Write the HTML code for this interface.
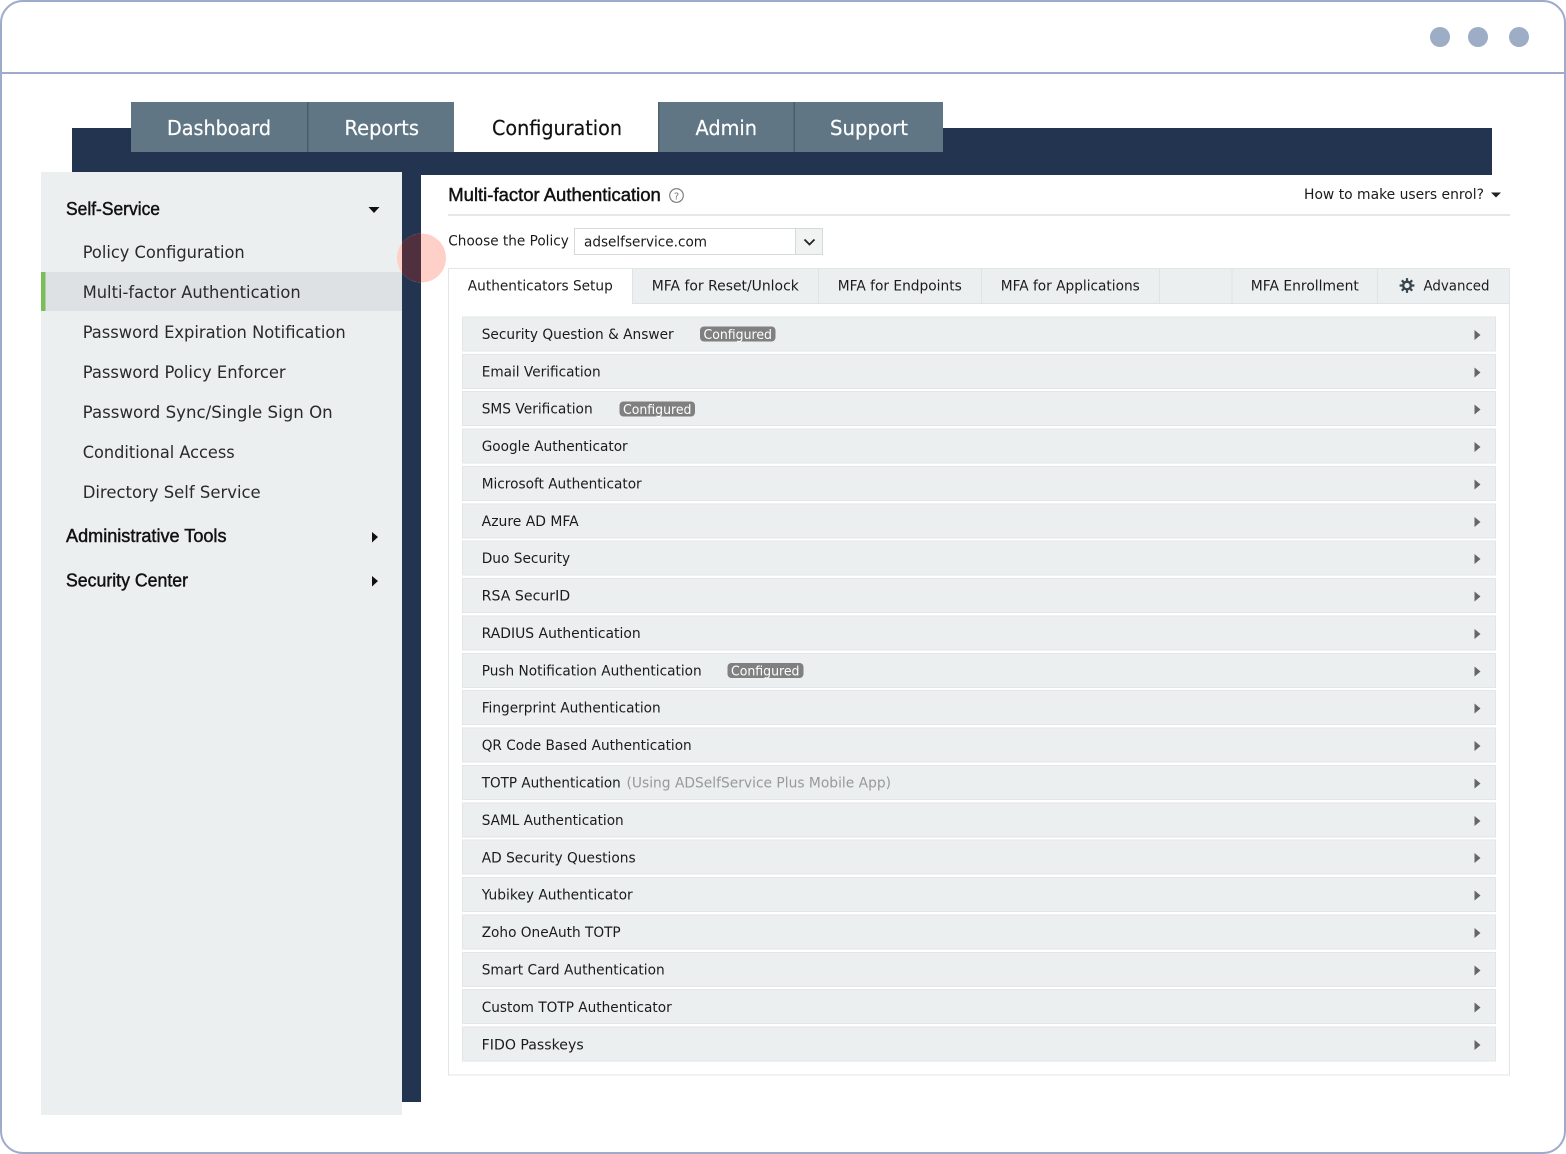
<!DOCTYPE html>
<html><head><meta charset="utf-8"><title>Multi-factor Authentication</title>
<style>
html,body{margin:0;padding:0;background:#fff;width:1566px;height:1154px;overflow:hidden}
svg{display:block}
text{font-family:"DejaVu Sans","Liberation Sans",sans-serif;font-size:13.8px;fill:#1b1b1b}
.r{font-size:13.8px}
.n{font-size:16.5px;fill:#2a2a2a}
.h{font-family:"Liberation Sans",sans-serif;font-size:18.5px;fill:#111;stroke:#111;stroke-width:.45px}
.t{font-size:20px;fill:#fff;stroke:#fff;stroke-width:.2px}
.row{fill:#ecefef;stroke:#e3e6e7;stroke-width:1}
.tb{font-size:14px}
.badge{font-size:13px;fill:#fff}
.arr{fill:#666}
</style></head><body>
<svg xmlns="http://www.w3.org/2000/svg" width="1566" height="1154" viewBox="0 0 1566 1154">
<defs>
<clipPath id="cn"><rect x="402" y="175" width="19" height="200"/></clipPath>
</defs>
<rect x="1" y="1" width="1564" height="1152" rx="22" fill="#fff" stroke="#9fabcb" stroke-width="2"/>
<rect x="2" y="72" width="1562" height="2" fill="#9fabcb"/>
<circle cx="1440" cy="37" r="10" fill="#9dadc6"/><circle cx="1478" cy="37" r="10" fill="#9dadc6"/><circle cx="1519" cy="37" r="10" fill="#9dadc6"/>

<rect x="72" y="128" width="1420" height="47" fill="#223450"/>
<rect x="131" y="102" width="323" height="50" fill="#607684"/>
<rect x="454" y="102" width="204" height="50" fill="#fff"/>
<rect x="658" y="102" width="285" height="50" fill="#607684"/>
<rect x="307" y="102" width="1.500" height="50" fill="#4a5c68"/>
<rect x="658" y="102" width="1.500" height="50" fill="#4f626e"/>
<rect x="793.500" y="102" width="1.500" height="50" fill="#4a5c68"/>
<text class="t" x="167" y="135" textLength="104" lengthAdjust="spacingAndGlyphs">Dashboard</text>
<text class="t" x="344.500" y="135" textLength="74.500" lengthAdjust="spacingAndGlyphs">Reports</text>
<text class="t" x="492" y="135" textLength="130" lengthAdjust="spacingAndGlyphs" style="fill:#111;stroke:#111">Configuration</text>
<text class="t" x="695.500" y="135" textLength="61.500" lengthAdjust="spacingAndGlyphs">Admin</text>
<text class="t" x="830" y="135" textLength="78" lengthAdjust="spacingAndGlyphs">Support</text>

<rect x="402" y="175" width="19" height="927" fill="#223450"/>
<rect x="41" y="172" width="361" height="943" fill="#ecefef"/>
<rect x="41" y="272" width="361" height="39" fill="#dee1e4"/>
<rect x="41" y="272" width="4.500" height="39" fill="#7cbd5a"/>
<circle cx="421.500" cy="258" r="24.500" fill="#ffd0c8"/>
<circle cx="421.500" cy="258" r="24.500" fill="#50303e" clip-path="url(#cn)"/>

<text class="h" x="66" y="215" textLength="94" lengthAdjust="spacingAndGlyphs">Self-Service</text>
<path d="M368.500 207h11l-5.500 6z" fill="#111"/>
<text class="n" x="82.700" y="257.800" textLength="162" lengthAdjust="spacingAndGlyphs">Policy Configuration</text>
<text class="n" x="82.700" y="298" textLength="218" lengthAdjust="spacingAndGlyphs">Multi-factor Authentication</text>
<text class="n" x="82.700" y="338" textLength="263" lengthAdjust="spacingAndGlyphs">Password Expiration Notification</text>
<text class="n" x="82.700" y="378" textLength="203" lengthAdjust="spacingAndGlyphs">Password Policy Enforcer</text>
<text class="n" x="82.700" y="418" textLength="250" lengthAdjust="spacingAndGlyphs">Password Sync/Single Sign On</text>
<text class="n" x="82.700" y="458" textLength="152" lengthAdjust="spacingAndGlyphs">Conditional Access</text>
<text class="n" x="82.700" y="498" textLength="178" lengthAdjust="spacingAndGlyphs">Directory Self Service</text>
<text class="h" x="66" y="542" textLength="160.500" lengthAdjust="spacingAndGlyphs">Administrative Tools</text>
<path d="M372 532l6 5-6 5.500z" fill="#111"/>
<text class="h" x="66" y="586.500" textLength="122" lengthAdjust="spacingAndGlyphs">Security Center</text>
<path d="M372 576l6 5-6 5.500z" fill="#111"/>

<text class="h" x="448.300" y="201" textLength="212.500" lengthAdjust="spacingAndGlyphs">Multi-factor Authentication</text>
<circle cx="676.500" cy="195.500" r="6.800" fill="none" stroke="#777" stroke-width="1.100"/>
<text x="676.500" y="199.500" text-anchor="middle" style="font-size:10px;fill:#777">?</text>
<text x="1304" y="199" textLength="180" lengthAdjust="spacingAndGlyphs">How to make users enrol?</text>
<path d="M1491 192.500h10l-5 5z" fill="#222"/>
<rect x="448" y="214" width="1062" height="2" fill="#e5e7e8"/>

<text x="448.300" y="245.500" textLength="120.500" lengthAdjust="spacingAndGlyphs">Choose the Policy</text>
<rect x="574.500" y="228.500" width="248" height="26" fill="#fff" stroke="#d6d9da"/>
<rect x="795.500" y="228.500" width="27" height="26" fill="#f1f3f3" stroke="#d6d9da"/>
<path d="M804.500 239.500l5 5 5-5" fill="none" stroke="#222" stroke-width="1.800"/>
<text x="584" y="246.500" textLength="123" lengthAdjust="spacingAndGlyphs">adselfservice.com</text>

<rect x="448.500" y="268.500" width="1061" height="806.500" fill="#fff" stroke="#e3e6e7"/>
<rect x="449" y="269" width="1060" height="34.500" fill="#ecefef"/>
<rect x="449" y="269" width="183" height="35" fill="#fff"/>
<g fill="#e0e3e4">
<rect x="632" y="269" width="1" height="35"/><rect x="818" y="269" width="1" height="35"/><rect x="981" y="269" width="1" height="35"/><rect x="1159" y="269" width="1" height="35"/><rect x="1231.500" y="269" width="1" height="35"/><rect x="1377" y="269" width="1" height="35"/>
<rect x="633" y="303" width="876" height="1"/>
</g>
<text class="tb" x="467.800" y="290.500" textLength="145" lengthAdjust="spacingAndGlyphs">Authenticators Setup</text>
<text class="tb" x="651.800" y="290.500" textLength="147" lengthAdjust="spacingAndGlyphs">MFA for Reset/Unlock</text>
<text class="tb" x="837.800" y="290.500" textLength="124" lengthAdjust="spacingAndGlyphs">MFA for Endpoints</text>
<text class="tb" x="1000.800" y="290.500" textLength="139" lengthAdjust="spacingAndGlyphs">MFA for Applications</text>
<text class="tb" x="1250.800" y="290.500" textLength="108" lengthAdjust="spacingAndGlyphs">MFA Enrollment</text>
<text class="tb" x="1423.500" y="290.500" textLength="66" lengthAdjust="spacingAndGlyphs">Advanced</text>
<g transform="translate(1407 285.500)" fill="none" stroke="#3a464e">
<circle r="3.800" stroke-width="2.400"/>
<path stroke-width="2.200" d="M0-7.400V-4.500M0 7.400V4.500M-7.400 0H-4.500M7.400 0H4.500M-5.200-5.200L-3.200-3.200M5.200 5.200L3.200 3.200M5.200-5.200L3.200-3.200M-5.200 5.200L-3.200 3.200"/>
</g>

<g>
<rect class="row" x="462.500" y="317" width="1033" height="34"/>
<rect class="row" x="462.500" y="354.500" width="1033" height="34"/>
<rect class="row" x="462.500" y="391.500" width="1033" height="34"/>
<rect class="row" x="462.500" y="429" width="1033" height="34"/>
<rect class="row" x="462.500" y="466.500" width="1033" height="34"/>
<rect class="row" x="462.500" y="504" width="1033" height="34"/>
<rect class="row" x="462.500" y="541" width="1033" height="34"/>
<rect class="row" x="462.500" y="578.500" width="1033" height="34"/>
<rect class="row" x="462.500" y="616" width="1033" height="34"/>
<rect class="row" x="462.500" y="653.500" width="1033" height="34"/>
<rect class="row" x="462.500" y="690.500" width="1033" height="34"/>
<rect class="row" x="462.500" y="728" width="1033" height="34"/>
<rect class="row" x="462.500" y="765.500" width="1033" height="34"/>
<rect class="row" x="462.500" y="803" width="1033" height="34"/>
<rect class="row" x="462.500" y="840" width="1033" height="34"/>
<rect class="row" x="462.500" y="877.500" width="1033" height="34"/>
<rect class="row" x="462.500" y="915" width="1033" height="34"/>
<rect class="row" x="462.500" y="952.500" width="1033" height="34"/>
<rect class="row" x="462.500" y="989.500" width="1033" height="34"/>
<rect class="row" x="462.500" y="1027" width="1033" height="34"/>
</g>
<g>
<text class="r" x="481.700" y="339" textLength="192" lengthAdjust="spacingAndGlyphs">Security Question &amp; Answer</text>
<text class="r" x="481.700" y="376.500" textLength="119" lengthAdjust="spacingAndGlyphs">Email Verification</text>
<text class="r" x="481.700" y="413.500" textLength="111" lengthAdjust="spacingAndGlyphs">SMS Verification</text>
<text class="r" x="481.700" y="451" textLength="146" lengthAdjust="spacingAndGlyphs">Google Authenticator</text>
<text class="r" x="481.700" y="488.500" textLength="160" lengthAdjust="spacingAndGlyphs">Microsoft Authenticator</text>
<text class="r" x="481.700" y="526" textLength="97" lengthAdjust="spacingAndGlyphs">Azure AD MFA</text>
<text class="r" x="481.700" y="563" textLength="88.500" lengthAdjust="spacingAndGlyphs">Duo Security</text>
<text class="r" x="481.700" y="600.500" textLength="88.500" lengthAdjust="spacingAndGlyphs">RSA SecurID</text>
<text class="r" x="481.700" y="638" textLength="159" lengthAdjust="spacingAndGlyphs">RADIUS Authentication</text>
<text class="r" x="481.700" y="675.500" textLength="220" lengthAdjust="spacingAndGlyphs">Push Notification Authentication</text>
<text class="r" x="481.700" y="712.500" textLength="179" lengthAdjust="spacingAndGlyphs">Fingerprint Authentication</text>
<text class="r" x="481.700" y="750" textLength="210" lengthAdjust="spacingAndGlyphs">QR Code Based Authentication</text>
<text class="r" x="481.700" y="787.500" textLength="139" lengthAdjust="spacingAndGlyphs">TOTP Authentication</text>
<text class="r" x="626.500" y="787.500" textLength="264.500" lengthAdjust="spacingAndGlyphs" style="fill:#999">(Using ADSelfService Plus Mobile App)</text>
<text class="r" x="481.700" y="825" textLength="142" lengthAdjust="spacingAndGlyphs">SAML Authentication</text>
<text class="r" x="481.700" y="862.300" textLength="154" lengthAdjust="spacingAndGlyphs">AD Security Questions</text>
<text class="r" x="481.700" y="899.500" textLength="151" lengthAdjust="spacingAndGlyphs">Yubikey Authenticator</text>
<text class="r" x="481.700" y="937" textLength="139" lengthAdjust="spacingAndGlyphs">Zoho OneAuth TOTP</text>
<text class="r" x="481.700" y="974.500" textLength="183" lengthAdjust="spacingAndGlyphs">Smart Card Authentication</text>
<text class="r" x="481.700" y="1012" textLength="190" lengthAdjust="spacingAndGlyphs">Custom TOTP Authenticator</text>
<text class="r" x="481.700" y="1049.300" textLength="102" lengthAdjust="spacingAndGlyphs">FIDO Passkeys</text>
</g>
<rect x="700" y="326.500" width="75.500" height="15" rx="4" fill="#808080"/>
<text class="badge" x="703.500" y="339" textLength="68.500" lengthAdjust="spacingAndGlyphs">Configured</text>
<rect x="619.500" y="401.500" width="75.500" height="15" rx="4" fill="#808080"/>
<text class="badge" x="623" y="414" textLength="68.500" lengthAdjust="spacingAndGlyphs">Configured</text>
<rect x="727.500" y="663" width="76" height="15" rx="4" fill="#808080"/>
<text class="badge" x="731" y="675.500" textLength="68.500" lengthAdjust="spacingAndGlyphs">Configured</text>
<g class="arr">
<path d="M1474.500 330l6 5-6 5z"/>
<path d="M1474.500 367.500l6 5-6 5z"/>
<path d="M1474.500 404.500l6 5-6 5z"/>
<path d="M1474.500 442l6 5-6 5z"/>
<path d="M1474.500 479.500l6 5-6 5z"/>
<path d="M1474.500 517l6 5-6 5z"/>
<path d="M1474.500 554l6 5-6 5z"/>
<path d="M1474.500 591.500l6 5-6 5z"/>
<path d="M1474.500 629l6 5-6 5z"/>
<path d="M1474.500 666.500l6 5-6 5z"/>
<path d="M1474.500 703.500l6 5-6 5z"/>
<path d="M1474.500 741l6 5-6 5z"/>
<path d="M1474.500 778.500l6 5-6 5z"/>
<path d="M1474.500 816l6 5-6 5z"/>
<path d="M1474.500 853l6 5-6 5z"/>
<path d="M1474.500 890.500l6 5-6 5z"/>
<path d="M1474.500 928l6 5-6 5z"/>
<path d="M1474.500 965.500l6 5-6 5z"/>
<path d="M1474.500 1002.500l6 5-6 5z"/>
<path d="M1474.500 1040l6 5-6 5z"/>
</g>
</svg>
</body></html>
